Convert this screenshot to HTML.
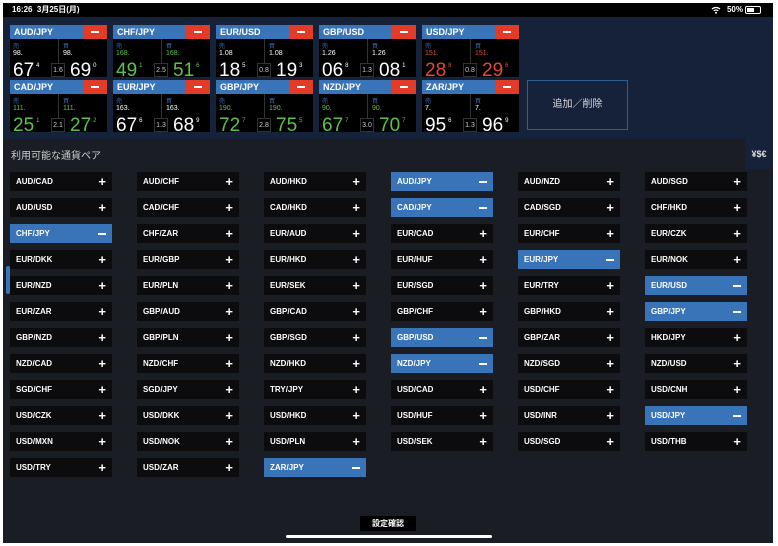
<!DOCTYPE html>
<html><head><meta charset="utf-8"><style>
*{margin:0;padding:0;box-sizing:border-box}
body{width:778px;height:546px;background:#fff;font-family:"Liberation Sans","Noto Sans CJK JP",sans-serif;position:relative;overflow:hidden}
#scr{position:absolute;left:3px;top:3px;width:770px;height:540px;background:#1a1d23;overflow:hidden}
.sb{position:absolute;left:0;top:0;width:770px;height:14px;background:#000;color:#fff;font-size:8px;font-weight:bold;line-height:14px}
.top{position:absolute;left:0;top:14px;width:770px;height:122px;background:#16213a}
.t{position:absolute;width:97px;height:52px;background:#000}
.t .h{height:14px;background:#3a74b8;color:#fff;font-size:9px;font-weight:bold;line-height:14px;padding-left:4px;position:relative}
.t .h i{position:absolute;right:0;top:0;width:24px;height:14px;background:#e23c28}
.t .h i:after{content:"";position:absolute;left:8px;top:6px;width:8px;height:2px;background:#fff}
.t .dv{position:absolute;left:48px;top:14px;width:1px;height:38px;background:#333}
.t .sp{position:absolute;left:41px;top:38px;width:14px;height:14px;border:1px solid #333;background:#000;color:#ccc;font-size:7px;text-align:center;line-height:14px}
.s{position:absolute;top:16px;font-size:6px;color:#3a74b8}
.p{position:absolute;top:25px;font-size:7px}
.b{position:absolute;top:31px;font-size:19px;line-height:20px}
.b sup{font-size:6px;vertical-align:9px;margin-left:2px}
.w{color:#fff}.g{color:#5cc24a}.r{color:#e2483a}
.add{position:absolute;left:524px;top:77px;width:101px;height:50px;border:1px solid #2f5e92;color:#ddd;font-size:10px;text-align:center;line-height:48px}
.hdr{position:absolute;left:8px;top:144px;color:#ccc;font-size:10px}
.rc{position:absolute;left:742px;top:136px;width:28px;height:30px;background:#16213a;color:#ddd;font-size:9px;font-weight:bold;line-height:30px;text-align:center}
.c{position:absolute;width:102px;height:19px;background:#0c0c0e;color:#fff;font-size:8px;font-weight:bold;line-height:19px;padding-left:6px}
.c:after{content:"+";position:absolute;right:6px;top:0;font-size:13px;font-weight:bold}
.c.on{background:#3a74b8}
.c.on:after{content:"";right:6px;top:9px;width:8px;height:2px;background:#fff}
.btn{position:absolute;left:357px;top:513px;width:56px;height:15px;background:#000;color:#fff;font-size:8px;font-weight:bold;text-align:center;line-height:15px}
.home{position:absolute;left:283px;top:532px;width:206px;height:3px;border-radius:2px;background:#fff}
.scroll{position:absolute;left:3px;top:263px;width:4px;height:28px;border-radius:2px;background:#3a74b8}
</style></head><body><div id="scr">
<div class="sb"><span style="position:absolute;left:9px">16:26&nbsp;&nbsp;3月25日(月)</span>
<svg style="position:absolute;right:52px;top:3px" width="10" height="8" viewBox="0 0 10 8"><path d="M1 3 A6 6 0 0 1 9 3" stroke="#fff" stroke-width="1.2" fill="none"/><path d="M2.8 4.8 A3.6 3.6 0 0 1 7.2 4.8" stroke="#fff" stroke-width="1.2" fill="none"/><circle cx="5" cy="6.8" r="1" fill="#fff"/></svg>
<span style="position:absolute;right:30px">50%</span><span style="position:absolute;right:12px;top:3px;width:16px;height:8px;border:1px solid #fff;border-radius:2px"><span style="position:absolute;left:1px;top:1px;width:7px;height:4px;background:#fff"></span></span></div>
<div class="top"></div>

<div class="t" style="left:7px;top:22px"><div class="h">AUD/JPY<i></i></div><div class="dv"></div><span class="s" style="left:3px">売</span><span class="s" style="left:53px">買</span><span class="p w" style="left:3px">98.</span><span class="p w" style="left:53px">98.</span><span class="b w" style="left:3px">67<sup>4</sup></span><span class="b w" style="left:60px">69<sup>0</sup></span><div class="sp">1.6</div></div>
<div class="t" style="left:110px;top:22px"><div class="h">CHF/JPY<i></i></div><div class="dv"></div><span class="s" style="left:3px">売</span><span class="s" style="left:53px">買</span><span class="p g" style="left:3px">168.</span><span class="p g" style="left:53px">168.</span><span class="b g" style="left:3px">49<sup>1</sup></span><span class="b g" style="left:60px">51<sup>6</sup></span><div class="sp">2.5</div></div>
<div class="t" style="left:213px;top:22px"><div class="h">EUR/USD<i></i></div><div class="dv"></div><span class="s" style="left:3px">売</span><span class="s" style="left:53px">買</span><span class="p w" style="left:3px">1.08</span><span class="p w" style="left:53px">1.08</span><span class="b w" style="left:3px">18<sup>5</sup></span><span class="b w" style="left:60px">19<sup>3</sup></span><div class="sp">0.8</div></div>
<div class="t" style="left:316px;top:22px"><div class="h">GBP/USD<i></i></div><div class="dv"></div><span class="s" style="left:3px">売</span><span class="s" style="left:53px">買</span><span class="p w" style="left:3px">1.26</span><span class="p w" style="left:53px">1.26</span><span class="b w" style="left:3px">06<sup>8</sup></span><span class="b w" style="left:60px">08<sup>1</sup></span><div class="sp">1.3</div></div>
<div class="t" style="left:419px;top:22px"><div class="h">USD/JPY<i></i></div><div class="dv"></div><span class="s" style="left:3px">売</span><span class="s" style="left:53px">買</span><span class="p r" style="left:3px">151.</span><span class="p r" style="left:53px">151.</span><span class="b r" style="left:3px">28<sup>8</sup></span><span class="b r" style="left:60px">29<sup>6</sup></span><div class="sp">0.8</div></div>

<div class="t" style="left:7px;top:77px"><div class="h">CAD/JPY<i></i></div><div class="dv"></div><span class="s" style="left:3px">売</span><span class="s" style="left:53px">買</span><span class="p g" style="left:3px">111.</span><span class="p g" style="left:53px">111.</span><span class="b g" style="left:3px">25<sup>1</sup></span><span class="b g" style="left:60px">27<sup>2</sup></span><div class="sp">2.1</div></div>
<div class="t" style="left:110px;top:77px"><div class="h">EUR/JPY<i></i></div><div class="dv"></div><span class="s" style="left:3px">売</span><span class="s" style="left:53px">買</span><span class="p w" style="left:3px">163.</span><span class="p w" style="left:53px">163.</span><span class="b w" style="left:3px">67<sup>6</sup></span><span class="b w" style="left:60px">68<sup>9</sup></span><div class="sp">1.3</div></div>
<div class="t" style="left:213px;top:77px"><div class="h">GBP/JPY<i></i></div><div class="dv"></div><span class="s" style="left:3px">売</span><span class="s" style="left:53px">買</span><span class="p g" style="left:3px">190.</span><span class="p g" style="left:53px">190.</span><span class="b g" style="left:3px">72<sup>7</sup></span><span class="b g" style="left:60px">75<sup>5</sup></span><div class="sp">2.8</div></div>
<div class="t" style="left:316px;top:77px"><div class="h">NZD/JPY<i></i></div><div class="dv"></div><span class="s" style="left:3px">売</span><span class="s" style="left:53px">買</span><span class="p g" style="left:3px">90.</span><span class="p g" style="left:53px">90.</span><span class="b g" style="left:3px">67<sup>7</sup></span><span class="b g" style="left:60px">70<sup>7</sup></span><div class="sp">3.0</div></div>
<div class="t" style="left:419px;top:77px"><div class="h">ZAR/JPY<i></i></div><div class="dv"></div><span class="s" style="left:3px">売</span><span class="s" style="left:53px">買</span><span class="p w" style="left:3px">7.</span><span class="p w" style="left:53px">7.</span><span class="b w" style="left:3px">95<sup>6</sup></span><span class="b w" style="left:60px">96<sup>9</sup></span><div class="sp">1.3</div></div>
<div class="add">追加／削除</div>

<div class="hdr">利用可能な通貨ペア</div>
<div class="rc">¥$€</div>
<div class="scroll"></div>

<div class="c" style="left:7px;top:169px">AUD/CAD</div><div class="c" style="left:134px;top:169px">AUD/CHF</div><div class="c" style="left:261px;top:169px">AUD/HKD</div><div class="c on" style="left:388px;top:169px">AUD/JPY</div><div class="c" style="left:515px;top:169px">AUD/NZD</div><div class="c" style="left:642px;top:169px">AUD/SGD</div>
<div class="c" style="left:7px;top:195px">AUD/USD</div><div class="c" style="left:134px;top:195px">CAD/CHF</div><div class="c" style="left:261px;top:195px">CAD/HKD</div><div class="c on" style="left:388px;top:195px">CAD/JPY</div><div class="c" style="left:515px;top:195px">CAD/SGD</div><div class="c" style="left:642px;top:195px">CHF/HKD</div>
<div class="c on" style="left:7px;top:221px">CHF/JPY</div><div class="c" style="left:134px;top:221px">CHF/ZAR</div><div class="c" style="left:261px;top:221px">EUR/AUD</div><div class="c" style="left:388px;top:221px">EUR/CAD</div><div class="c" style="left:515px;top:221px">EUR/CHF</div><div class="c" style="left:642px;top:221px">EUR/CZK</div>
<div class="c" style="left:7px;top:247px">EUR/DKK</div><div class="c" style="left:134px;top:247px">EUR/GBP</div><div class="c" style="left:261px;top:247px">EUR/HKD</div><div class="c" style="left:388px;top:247px">EUR/HUF</div><div class="c on" style="left:515px;top:247px">EUR/JPY</div><div class="c" style="left:642px;top:247px">EUR/NOK</div>
<div class="c" style="left:7px;top:273px">EUR/NZD</div><div class="c" style="left:134px;top:273px">EUR/PLN</div><div class="c" style="left:261px;top:273px">EUR/SEK</div><div class="c" style="left:388px;top:273px">EUR/SGD</div><div class="c" style="left:515px;top:273px">EUR/TRY</div><div class="c on" style="left:642px;top:273px">EUR/USD</div>
<div class="c" style="left:7px;top:299px">EUR/ZAR</div><div class="c" style="left:134px;top:299px">GBP/AUD</div><div class="c" style="left:261px;top:299px">GBP/CAD</div><div class="c" style="left:388px;top:299px">GBP/CHF</div><div class="c" style="left:515px;top:299px">GBP/HKD</div><div class="c on" style="left:642px;top:299px">GBP/JPY</div>
<div class="c" style="left:7px;top:325px">GBP/NZD</div><div class="c" style="left:134px;top:325px">GBP/PLN</div><div class="c" style="left:261px;top:325px">GBP/SGD</div><div class="c on" style="left:388px;top:325px">GBP/USD</div><div class="c" style="left:515px;top:325px">GBP/ZAR</div><div class="c" style="left:642px;top:325px">HKD/JPY</div>
<div class="c" style="left:7px;top:351px">NZD/CAD</div><div class="c" style="left:134px;top:351px">NZD/CHF</div><div class="c" style="left:261px;top:351px">NZD/HKD</div><div class="c on" style="left:388px;top:351px">NZD/JPY</div><div class="c" style="left:515px;top:351px">NZD/SGD</div><div class="c" style="left:642px;top:351px">NZD/USD</div>
<div class="c" style="left:7px;top:377px">SGD/CHF</div><div class="c" style="left:134px;top:377px">SGD/JPY</div><div class="c" style="left:261px;top:377px">TRY/JPY</div><div class="c" style="left:388px;top:377px">USD/CAD</div><div class="c" style="left:515px;top:377px">USD/CHF</div><div class="c" style="left:642px;top:377px">USD/CNH</div>
<div class="c" style="left:7px;top:403px">USD/CZK</div><div class="c" style="left:134px;top:403px">USD/DKK</div><div class="c" style="left:261px;top:403px">USD/HKD</div><div class="c" style="left:388px;top:403px">USD/HUF</div><div class="c" style="left:515px;top:403px">USD/INR</div><div class="c on" style="left:642px;top:403px">USD/JPY</div>
<div class="c" style="left:7px;top:429px">USD/MXN</div><div class="c" style="left:134px;top:429px">USD/NOK</div><div class="c" style="left:261px;top:429px">USD/PLN</div><div class="c" style="left:388px;top:429px">USD/SEK</div><div class="c" style="left:515px;top:429px">USD/SGD</div><div class="c" style="left:642px;top:429px">USD/THB</div>
<div class="c" style="left:7px;top:455px">USD/TRY</div><div class="c" style="left:134px;top:455px">USD/ZAR</div><div class="c on" style="left:261px;top:455px">ZAR/JPY</div>

<div class="btn">設定確認</div>
<div class="home"></div>
</div></body></html>
